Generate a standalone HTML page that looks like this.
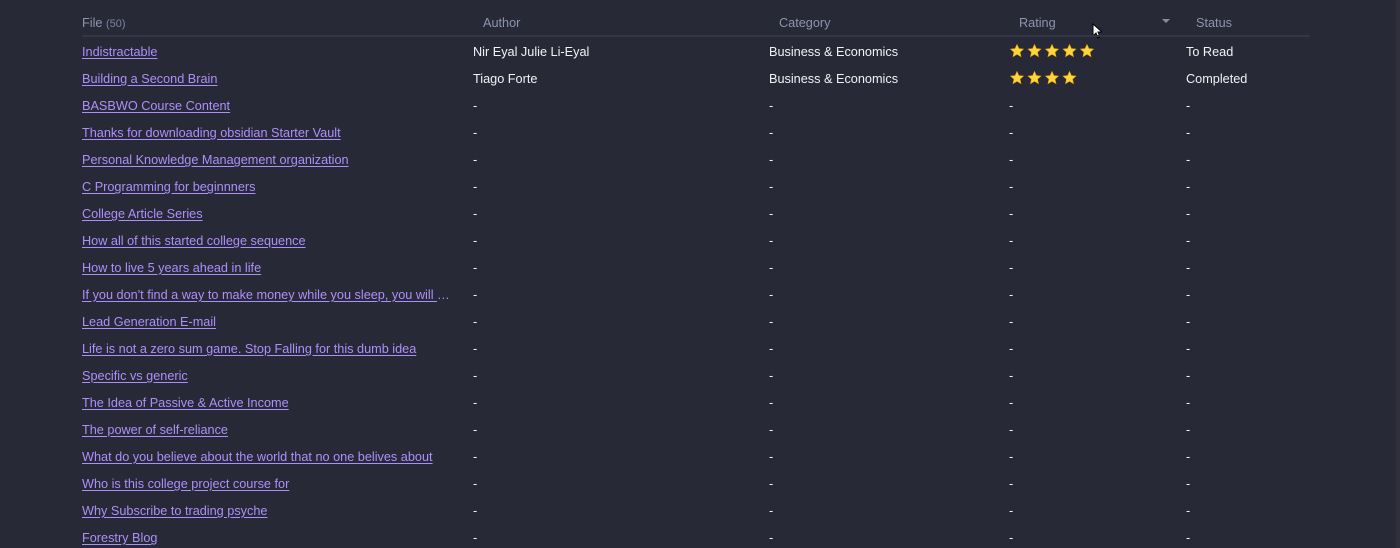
<!DOCTYPE html>
<html><head><meta charset="utf-8"><style>
html,body{margin:0;padding:0}
body{width:1400px;height:548px;background:#282936;position:relative;overflow:hidden;font-family:"Segoe UI","Liberation Sans",sans-serif;font-size:12.7px;color:#f2f2f5}
.sb{position:absolute;right:0;top:0;width:4px;height:548px;background:#2f303c}
.h{position:absolute;top:15px;color:#8c94ad;font-size:12.7px;line-height:16px}
.h small{font-size:11px;color:#7a83a3}
.line{position:absolute;left:82px;top:35px;width:1228px;height:2px;background:#343646}
.r{position:absolute;left:0;width:1400px;height:18px;line-height:18px}
.r span{position:absolute;white-space:nowrap}
.f{left:82px;color:#ad8ffb;text-decoration:underline;text-underline-offset:2px}
.a{left:473px}.c{left:769px}.ra{left:1009px}.s{left:1186px}
.st{position:absolute;top:1px}
</style></head><body>
<div class="sb"></div>
<div class="h" style="left:82px">File <small>(50)</small></div>
<div class="h" style="left:483px">Author</div>
<div class="h" style="left:779px">Category</div>
<div class="h" style="left:1019px">Rating</div>
<div style="position:absolute;left:1162px;top:19px;width:0;height:0;border-left:4px solid transparent;border-right:4px solid transparent;border-top:4px solid #8a8d99"></div>
<svg style="position:absolute;left:1092px;top:23px" width="10" height="16" viewBox="0 0 10 16"><path d="M1 1 L1 13 L4 10 L6 15 L8 14 L6 9 L10 9 Z" fill="#fff" stroke="#000" stroke-width="1"/></svg>
<div class="h" style="left:1196px">Status</div>
<div class="line"></div>
<svg width="0" height="0" style="position:absolute"><defs><path id="star" d="M7 0.5 L8.9 4.6 L13.4 5.1 L10 8.1 L11 12.6 L7 10.3 L3 12.6 L4 8.1 L0.6 5.1 L5.1 4.6 Z" fill="#fcd53f" stroke="#f2a900" stroke-width="0.6"/></defs></svg>
<div class="r" style="top:43px"><span class="f">Indistractable</span><span class="a">Nir Eyal Julie Li-Eyal</span><span class="c">Business &amp; Economics</span><svg class="st" style="left:1010px" width="90" height="14"><use href="#star" x="0"/><use href="#star" x="17.5"/><use href="#star" x="35"/><use href="#star" x="52.5"/><use href="#star" x="70"/></svg><span class="s">To Read</span></div>
<div class="r" style="top:70px"><span class="f">Building a Second Brain</span><span class="a">Tiago Forte</span><span class="c">Business &amp; Economics</span><svg class="st" style="left:1010px" width="90" height="14"><use href="#star" x="0"/><use href="#star" x="17.5"/><use href="#star" x="35"/><use href="#star" x="52.5"/></svg><span class="s">Completed</span></div>
<div class="r" style="top:97px"><span class="f">BASBWO Course Content</span><span class="a">-</span><span class="c">-</span><span class="ra">-</span><span class="s">-</span></div>
<div class="r" style="top:124px"><span class="f">Thanks for downloading obsidian Starter Vault</span><span class="a">-</span><span class="c">-</span><span class="ra">-</span><span class="s">-</span></div>
<div class="r" style="top:151px"><span class="f">Personal Knowledge Management organization</span><span class="a">-</span><span class="c">-</span><span class="ra">-</span><span class="s">-</span></div>
<div class="r" style="top:178px"><span class="f">C Programming for beginnners</span><span class="a">-</span><span class="c">-</span><span class="ra">-</span><span class="s">-</span></div>
<div class="r" style="top:205px"><span class="f">College Article Series</span><span class="a">-</span><span class="c">-</span><span class="ra">-</span><span class="s">-</span></div>
<div class="r" style="top:232px"><span class="f">How all of this started college sequence</span><span class="a">-</span><span class="c">-</span><span class="ra">-</span><span class="s">-</span></div>
<div class="r" style="top:259px"><span class="f">How to live 5 years ahead in life</span><span class="a">-</span><span class="c">-</span><span class="ra">-</span><span class="s">-</span></div>
<div class="r" style="top:286px"><span class="f" style="width:372px;overflow:hidden;text-overflow:ellipsis">If you don't find a way to make money while you sleep, you will work until you die</span><span class="a">-</span><span class="c">-</span><span class="ra">-</span><span class="s">-</span></div>
<div class="r" style="top:313px"><span class="f">Lead Generation E-mail</span><span class="a">-</span><span class="c">-</span><span class="ra">-</span><span class="s">-</span></div>
<div class="r" style="top:340px"><span class="f">Life is not a zero sum game. Stop Falling for this dumb idea</span><span class="a">-</span><span class="c">-</span><span class="ra">-</span><span class="s">-</span></div>
<div class="r" style="top:367px"><span class="f">Specific vs generic</span><span class="a">-</span><span class="c">-</span><span class="ra">-</span><span class="s">-</span></div>
<div class="r" style="top:394px"><span class="f">The Idea of Passive &amp; Active Income</span><span class="a">-</span><span class="c">-</span><span class="ra">-</span><span class="s">-</span></div>
<div class="r" style="top:421px"><span class="f">The power of self-reliance</span><span class="a">-</span><span class="c">-</span><span class="ra">-</span><span class="s">-</span></div>
<div class="r" style="top:448px"><span class="f">What do you believe about the world that no one belives about</span><span class="a">-</span><span class="c">-</span><span class="ra">-</span><span class="s">-</span></div>
<div class="r" style="top:475px"><span class="f">Who is this college project course for</span><span class="a">-</span><span class="c">-</span><span class="ra">-</span><span class="s">-</span></div>
<div class="r" style="top:502px"><span class="f">Why Subscribe to trading psyche</span><span class="a">-</span><span class="c">-</span><span class="ra">-</span><span class="s">-</span></div>
<div class="r" style="top:529px"><span class="f">Forestry Blog</span><span class="a">-</span><span class="c">-</span><span class="ra">-</span><span class="s">-</span></div>
</body></html>
